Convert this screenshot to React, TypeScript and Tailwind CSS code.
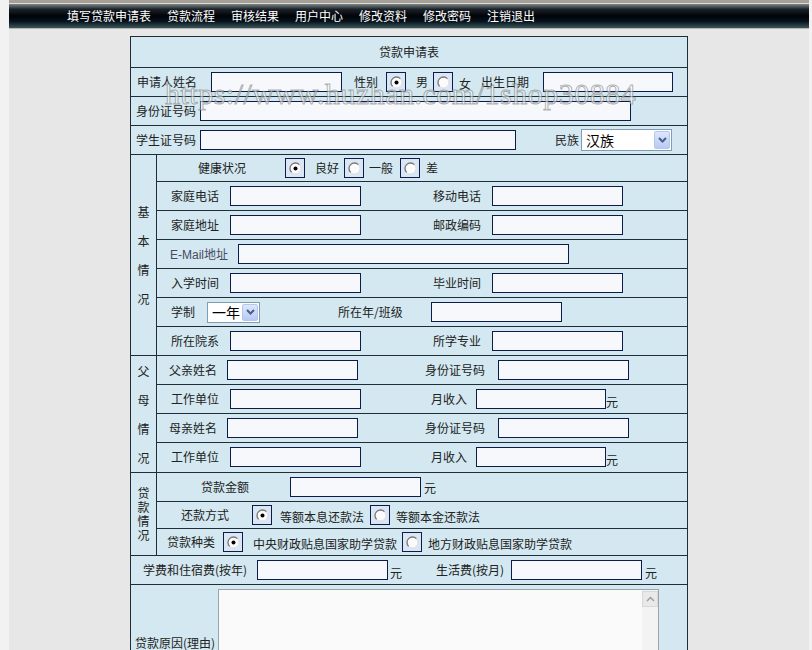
import React from "react";

const LINE = "border-[#1f2d38]";

function Inp({ c }: { c: string }) {
  return (
    <input
      type="text"
      className={`h-[20px] shrink-0 border border-[#0d1b4b] bg-[#f6f8fb] outline-none ${c}`}
    />
  );
}

function Radio({ on, c = "" }: { on?: boolean; c?: string }) {
  return (
    <span
      className={`flex h-[20px] w-[20px] shrink-0 items-center justify-center border border-[#0d1b4b] bg-[#dbe6f4] ${c}`}
    >
      <svg width="13" height="13" viewBox="0 0 13 13">
        <circle cx="6.5" cy="6.5" r="5.5" fill="#fbfbfb" stroke="#dcdcdc" strokeWidth="1" />
        <path d="M2.6 10.4 A5.5 5.5 0 0 1 10.4 2.6" fill="none" stroke="#7a7a7a" strokeWidth="1.3" />
        {on && <circle cx="6.5" cy="6.5" r="2" fill="#000" />}
      </svg>
    </span>
  );
}

function Select({ text, c }: { text: string; c: string }) {
  return (
    <div className={`flex shrink-0 items-stretch border border-[#7f9db9] bg-white p-[1px] ${c}`}>
      <span className="flex flex-1 items-center pl-[3px] text-[14px] leading-none text-black">{text}</span>
      <span className="flex w-[16px] items-center justify-center rounded-[2px] border border-[#b4c6ee] bg-[linear-gradient(#dde7fc,#b8caf4)]">
        <svg width="9" height="6" viewBox="0 0 9 6">
          <path d="M1 1 L4.5 4.5 L8 1" fill="none" stroke="#4a5f86" strokeWidth="2" />
        </svg>
      </span>
    </div>
  );
}

function Row({ h = "h-[29px]", b = true, children }: { h?: string; b?: boolean; children: React.ReactNode }) {
  return <div className={`flex ${h} items-center ${b ? `border-b ${LINE}` : ""}`}>{children}</div>;
}

function L({ c = "", children }: { c?: string; children: React.ReactNode }) {
  return <span className={`shrink-0 whitespace-nowrap leading-[14px] ${c}`}>{children}</span>;
}

function Side({ chars, lh }: { chars: string[]; lh: string }) {
  return (
    <div className={`flex w-[26px] shrink-0 flex-col items-center justify-center border-r ${LINE}`}>
      {chars.map((ch, i) => (
        <span key={i} className={lh}>
          {ch}
        </span>
      ))}
    </div>
  );
}

export default function App() {
  return (
    <div className="min-h-[650px] bg-[#f2f2f2] font-['Noto_Sans_CJK_SC','Noto_Sans',sans-serif] text-[12px] text-[#222]">
      <div className="relative ml-[9px] min-h-[650px] w-[800px] bg-[#e7e7e7]">
        {/* header */}
        <div className="h-[3px] bg-[#a59f96]" />
        <div className="h-[1px] bg-[#dcdcdc]" />
        <div className="flex h-[24px] items-center gap-[16px] bg-[linear-gradient(to_bottom,#7c8689_0%,#1b2227_22%,#000309_50%,#06121a_72%,#3b575c_100%)] pl-[58px] text-white">
          {["填写贷款申请表", "贷款流程", "审核结果", "用户中心", "修改资料", "修改密码", "注销退出"].map((t) => (
            <span key={t} className="leading-[14px]">
              {t}
            </span>
          ))}
        </div>
        <div className="h-[1px] bg-[#b5b5b5]" />

        {/* form */}
        <div className={`mx-auto mt-[7px] w-[558px] border ${LINE} bg-[#d3e8f0]`}>
          <Row h="h-[31px]">
            <span className="flex-1 text-center leading-[14px]">贷款申请表</span>
          </Row>

          <Row>
            <L c="ml-[6px]">申请人姓名</L>
            <Inp c="ml-[14px] w-[131px]" />
            <L c="ml-[12px]">性别</L>
            <Radio on c="ml-[8px]" />
            <L c="ml-[10px]">男</L>
            <Radio c="ml-[5px]" />
            <L c="ml-[6px] mt-[4px]">女</L>
            <L c="ml-[10px]">出生日期</L>
            <Inp c="ml-[14px] w-[130px]" />
          </Row>

          <Row>
            <L c="ml-[5px]">身份证号码</L>
            <Inp c="ml-[4px] w-[431px]" />
          </Row>

          <Row>
            <L c="ml-[5px]">学生证号码</L>
            <Inp c="ml-[4px] w-[316px]" />
            <L c="ml-[39px]">民族</L>
            <Select text="汉族" c="ml-[2px] h-[22px] w-[91px]" />
          </Row>

          {/* 基本情况 */}
          <div className={`flex border-b ${LINE}`}>
            <Side chars={["基", "本", "情", "况"]} lh="leading-[29px]" />
            <div className="flex-1">
              <Row h="h-[27px]">
                <L c="ml-[41px]">健康状况</L>
                <Radio on c="ml-[39px]" />
                <L c="ml-[10px]">良好</L>
                <Radio c="ml-[5px]" />
                <L c="ml-[5px]">一般</L>
                <Radio c="ml-[7px]" />
                <L c="ml-[6px]">差</L>
              </Row>
              <Row>
                <L c="ml-[14px] w-[59px]">家庭电话</L>
                <Inp c="w-[131px]" />
                <L c="ml-[72px] w-[59px]">移动电话</L>
                <Inp c="w-[131px]" />
              </Row>
              <Row>
                <L c="ml-[14px] w-[59px]">家庭地址</L>
                <Inp c="w-[131px]" />
                <L c="ml-[72px] w-[59px]">邮政编码</L>
                <Inp c="w-[131px]" />
              </Row>
              <Row>
                <L c="ml-[13px] w-[68px] text-[#4a4a66]">
                  <span className="font-['Liberation_Sans',sans-serif]">E-Mail</span>地址
                </L>
                <Inp c="w-[331px]" />
              </Row>
              <Row>
                <L c="ml-[14px] w-[59px]">入学时间</L>
                <Inp c="w-[131px]" />
                <L c="ml-[72px] w-[59px]">毕业时间</L>
                <Inp c="w-[131px]" />
              </Row>
              <Row>
                <L c="ml-[14px] w-[36px]">学制</L>
                <Select text="一年" c="h-[21px] w-[53px]" />
                <L c="ml-[78px] w-[93px]">所在年/班级</L>
                <Inp c="w-[131px]" />
              </Row>
              <Row b={false} h="h-[28px]">
                <L c="ml-[14px] w-[59px]">所在院系</L>
                <Inp c="w-[131px]" />
                <L c="ml-[72px] w-[59px]">所学专业</L>
                <Inp c="w-[131px]" />
              </Row>
            </div>
          </div>

          {/* 父母情况 */}
          <div className={`flex border-b ${LINE}`}>
            <Side chars={["父", "母", "情", "况"]} lh="leading-[29px]" />
            <div className="flex-1">
              <Row>
                <L c="ml-[12px] w-[58px]">父亲姓名</L>
                <Inp c="w-[131px]" />
                <L c="ml-[67px] w-[73px]">身份证号码</L>
                <Inp c="w-[131px]" />
              </Row>
              <Row>
                <L c="ml-[14px] w-[59px]">工作单位</L>
                <Inp c="w-[131px]" />
                <L c="ml-[70px] w-[45px]">月收入</L>
                <Inp c="w-[130px]" />
                <L c="mt-[5px]">元</L>
              </Row>
              <Row>
                <L c="ml-[12px] w-[58px]">母亲姓名</L>
                <Inp c="w-[131px]" />
                <L c="ml-[67px] w-[73px]">身份证号码</L>
                <Inp c="w-[131px]" />
              </Row>
              <Row b={false} h="h-[28px]">
                <L c="ml-[14px] w-[59px]">工作单位</L>
                <Inp c="w-[131px]" />
                <L c="ml-[70px] w-[45px]">月收入</L>
                <Inp c="w-[130px]" />
                <L c="mt-[5px]">元</L>
              </Row>
            </div>
          </div>

          {/* 贷款情况 */}
          <div className={`flex border-b ${LINE}`}>
            <Side chars={["贷", "款", "情", "况"]} lh="leading-[14px]" />
            <div className="flex-1">
              <Row>
                <L c="ml-[44px] w-[89px]">贷款金额</L>
                <Inp c="w-[131px]" />
                <L c="ml-[3px] mt-[2px]">元</L>
              </Row>
              <Row h="h-[27px]">
                <L c="ml-[24px] w-[71px]">还款方式</L>
                <Radio on />
                <L c="ml-[8px] mt-[3px]">等额本息还款法</L>
                <Radio c="ml-[6px]" />
                <L c="ml-[6px] mt-[3px]">等额本金还款法</L>
              </Row>
              <Row b={false} h="h-[26px]">
                <L c="ml-[10px] w-[56px]">贷款种类</L>
                <Radio on />
                <L c="ml-[10px] mt-[3px]">中央财政贴息国家助学贷款</L>
                <Radio c="ml-[5px]" />
                <L c="ml-[6px] mt-[3px]">地方财政贴息国家助学贷款</L>
              </Row>
            </div>
          </div>

          <Row>
            <L c="ml-[12px] w-[114px]">学费和住宿费(按年)</L>
            <Inp c="w-[131px]" />
            <L c="ml-[2px] mt-[5px]">元</L>
            <L c="ml-[34px] w-[75px]">生活费(按月)</L>
            <Inp c="w-[131px]" />
            <L c="ml-[3px] mt-[5px]">元</L>
          </Row>

          <div className="flex items-center py-[4px]">
            <L c="ml-[4px] w-[83px]">贷款原因(理由)</L>
            <div className="flex h-[108px] w-[441px] shrink-0 border border-[#9aa4ad] bg-[#fafafa]">
              <div className="flex-1" />
              <div className="flex w-[16px] flex-col bg-[#f3f3f3] pt-[1px]">
                <span className="flex h-[16px] items-center justify-center border border-[#d8d8d8] bg-[#e9e9e9]">
                  <svg width="9" height="6" viewBox="0 0 9 6">
                    <path d="M1 5 L4.5 1.5 L8 5" fill="none" stroke="#a0a0a0" strokeWidth="1.5" />
                  </svg>
                </span>
              </div>
            </div>
          </div>
        </div>

        {/* watermark */}
        <div className="pointer-events-none absolute left-[156px] top-[79px] whitespace-nowrap font-['Liberation_Serif',serif] text-[30px] leading-[30px] tracking-[0.5px] text-[rgba(255,255,255,0.55)] [-webkit-text-stroke:1px_rgba(110,110,110,0.55)]">
          https://www.huzhan.com/1shop30884
        </div>
      </div>
    </div>
  );
}
